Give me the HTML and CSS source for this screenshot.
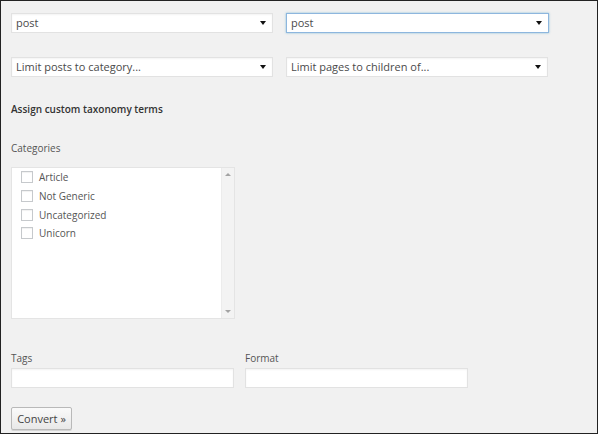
FILE: index.html
```html
<!DOCTYPE html>
<html lang="en">
<head>
<meta charset="UTF-8">
<meta name="viewport" content="width=device-width, initial-scale=1.0">
<title>Convert Post Types</title>
<link rel="stylesheet" href="styles.css">
</head>
<body>
  <div class="frame">
    <!-- Post type selects -->
    <div class="row">
      <div class="select wide">
        <span>post</span>
        <i class="arrow"></i>
      </div>
      <div class="select wide focused">
        <span>post</span>
        <i class="arrow"></i>
      </div>
    </div>

    <div class="row second">
      <div class="select wide">
        <span>Limit posts to category...</span>
        <i class="arrow"></i>
      </div>
      <div class="select wide">
        <span>Limit pages to children of...</span>
        <i class="arrow"></i>
      </div>
    </div>

    <h4 class="heading">Assign custom taxonomy terms</h4>

    <div class="label cat-label">Categories</div>
    <div class="catbox">
      <ul class="checklist">
        <li><span class="check"></span>Article</li>
        <li><span class="check"></span>Not Generic</li>
        <li><span class="check"></span>Uncategorized</li>
        <li><span class="check"></span>Unicorn</li>
      </ul>
      <div class="scrollbar">
        <i class="up"></i>
        <i class="down"></i>
      </div>
    </div>

    <div class="fields">
      <div class="field">
        <div class="label">Tags</div>
        <div class="input"></div>
      </div>
      <div class="field">
        <div class="label">Format</div>
        <div class="input"></div>
      </div>
    </div>

    <button class="button">Convert &raquo;</button>
  </div>
</body>
</html>
```

FILE: styles.css
```css
body {
  margin: 0;
  padding: 0;
  background: #fff;
  font-family: "Open Sans", "Noto Sans", sans-serif;
  color: #444;
}

.frame {
  box-sizing: border-box;
  width: 598px;
  height: 434px;
  border: 1px solid #222;
  background: #f1f1f1;
  padding: 12px 10px 0;
}

.row {
  display: flex;
  gap: 13px;
}

.row.second {
  margin-top: 24px;
}

.select {
  position: relative;
  box-sizing: border-box;
  height: 20px;
  background: #fff;
  border: 1px solid #e2e2e2;
  box-shadow: inset 0 1px 2px rgba(0, 0, 0, 0.05);
  font-size: 11px;
  line-height: 18px;
  color: #4a4a4a;
  padding-left: 4px;
}

.select.wide {
  width: 262px;
}

.select.focused {
  width: 263px;
  border-color: #8db6de;
  box-shadow: 0 0 2px rgba(30, 140, 190, 0.5);
}

.arrow {
  position: absolute;
  right: 6px;
  top: 7px;
  width: 0;
  height: 0;
  border-left: 3px solid transparent;
  border-right: 3px solid transparent;
  border-top: 4px solid #111;
}

.heading {
  margin: 25px 0 0;
  font-size: 10px;
  line-height: 14px;
  font-weight: 600;
  color: #333;
}

.label {
  font-size: 10px;
  line-height: 14px;
  color: #555;
}

.cat-label {
  margin-top: 25px;
}

.catbox {
  display: flex;
  box-sizing: border-box;
  width: 224px;
  height: 152px;
  margin-top: 12px;
  background: #fff;
  border: 1px solid #e4e4e4;
}

.checklist {
  flex: 1;
  list-style: none;
  margin: 0;
  padding: 0 0 0 9px;
}

.checklist li {
  display: flex;
  align-items: center;
  gap: 6px;
  height: 18.7px;
  font-size: 10px;
  color: #555;
}

.check {
  box-sizing: border-box;
  width: 12px;
  height: 12px;
  border: 1px solid #c6c9cc;
  background: #fff;
  box-shadow: inset 0 1px 1px rgba(0, 0, 0, 0.06);
}

.scrollbar {
  position: relative;
  width: 12px;
  background: #f3f3f3;
  border-left: 1px solid #ececec;
}

.scrollbar i {
  position: absolute;
  left: 3px;
  width: 0;
  height: 0;
  border-left: 3px solid transparent;
  border-right: 3px solid transparent;
}

.scrollbar .up {
  top: 5px;
  border-bottom: 3px solid #a3a3a3;
}

.scrollbar .down {
  bottom: 5px;
  border-top: 3px solid #a3a3a3;
}

.fields {
  display: flex;
  gap: 11px;
  margin-top: 32px;
}

.field .input {
  box-sizing: border-box;
  width: 223px;
  height: 20px;
  margin-top: 3px;
  background: #fff;
  border: 1px solid #e2e2e2;
  box-shadow: inset 0 1px 2px rgba(0, 0, 0, 0.05);
}

.button {
  display: block;
  box-sizing: border-box;
  width: 61px;
  height: 23px;
  margin-top: 19px;
  padding: 0;
  font-family: "Open Sans", "Noto Sans", sans-serif;
  font-size: 11px;
  color: #444;
  background: linear-gradient(#fafafa, #e8e8e8);
  border: 1px solid #b9b9b9;
  border-radius: 2px;
  box-shadow: 0 1px 0 #d4d4d4;
}
```
